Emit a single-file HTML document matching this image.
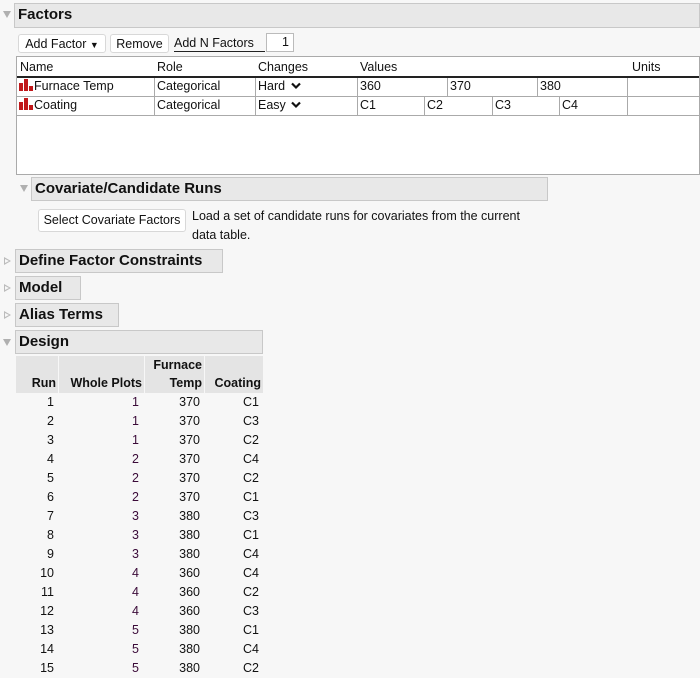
<!DOCTYPE html>
<html><head><meta charset="utf-8"><style>
body{margin:0;width:700px;height:678px;background:#f7f7f7;font-family:"Liberation Sans",sans-serif;font-size:12.5px;color:#111;position:relative;overflow:hidden}
.a{position:absolute;white-space:nowrap}
.hdr{position:absolute;background:#e8e8e8;border:1px solid #c8c8c8;font-weight:bold;font-size:15px;line-height:22px;padding-left:3px;box-sizing:border-box}
.tri{position:absolute;width:0;height:0}
.td{border-left:4px solid transparent;border-right:4px solid transparent;border-top:7px solid #b0b0b0}
.tr{border-top:4px solid transparent;border-bottom:4px solid transparent;border-left:7px solid #bbb}
.tr:after{content:"";position:absolute;left:-6px;top:-2px;border-top:2px solid transparent;border-bottom:2px solid transparent;border-left:4px solid #f7f7f7}
.btn{position:absolute;background:#fff;border:1px solid #d8d8d8;border-radius:3px;box-sizing:border-box;text-align:center;line-height:18px;font-size:12.5px}
.cell{position:absolute;border-left:1px solid #aaa;border-bottom:1px solid #aaa;box-sizing:border-box;padding-left:2px;line-height:17px;font-size:12.5px;white-space:nowrap}
.bars{display:inline-block;width:14px;height:12px;vertical-align:-1px;margin-right:1px;position:relative}
.bars i{position:absolute;bottom:0;background:#c0171a;width:4px}
.r{position:absolute;text-align:right;font-size:12.5px}
.h{position:absolute;background:#e4e4e4;font-weight:bold;font-size:12.5px;text-align:right;box-sizing:border-box;padding-right:2px;line-height:18px}
.chev{display:inline-block;vertical-align:0;margin-left:2px}
</style></head><body>
<div class="tri td" style="left:3px;top:11px"></div>
<div class="hdr" style="left:14px;top:3px;width:686px;height:25px">Factors</div>
<div class="btn" style="left:18px;top:34px;width:88px;height:19px">Add Factor <span style="font-size:9px">▼</span></div>
<div class="btn" style="left:110px;top:34px;width:59px;height:19px">Remove</div>
<div class="a" style="left:174px;top:35px;font-size:12.5px;border-bottom:1px solid #222;width:91px;line-height:16px">Add N Factors</div>
<div class="a" style="left:266px;top:33px;width:28px;height:19px;background:#fff;border:1px solid #bbb;box-sizing:border-box;text-align:right;padding-right:4px;line-height:17px">1</div>
<div class="a" style="left:16px;top:56px;width:684px;height:119px;background:#fff;border:1px solid #aaa;box-sizing:border-box"></div>
<div class="a" style="left:17px;top:76px;width:682px;height:2px;background:#222"></div>
<div class="a" style="left:20px;top:60px">Name</div>
<div class="a" style="left:157px;top:60px">Role</div>
<div class="a" style="left:258px;top:60px">Changes</div>
<div class="a" style="left:360px;top:60px">Values</div>
<div class="a" style="left:632px;top:60px">Units</div>
<div class="cell" style="left:17px;top:78px;width:137px;height:19px;border-left:0"><span class="bars"><i style="left:0;height:8px"></i><i style="left:5px;height:12px"></i><i style="left:10px;height:5px"></i></span>Furnace Temp</div>
<div class="cell" style="left:154px;top:78px;width:101px;height:19px">Categorical</div>
<div class="cell" style="left:255px;top:78px;width:102px;height:19px">Hard <svg class="chev" width="10" height="8"><path d="M1 1.5L5 5.5L9 1.5" stroke="#111" stroke-width="2.2" fill="none"/></svg></div>
<div class="cell" style="left:357px;top:78px;width:90px;height:19px">360</div>
<div class="cell" style="left:447px;top:78px;width:90px;height:19px">370</div>
<div class="cell" style="left:537px;top:78px;width:90px;height:19px">380</div>
<div class="cell" style="left:627px;top:78px;width:72px;height:19px"></div>
<div class="cell" style="left:17px;top:97px;width:137px;height:19px;border-left:0"><span class="bars"><i style="left:0;height:8px"></i><i style="left:5px;height:12px"></i><i style="left:10px;height:5px"></i></span>Coating</div>
<div class="cell" style="left:154px;top:97px;width:101px;height:19px">Categorical</div>
<div class="cell" style="left:255px;top:97px;width:102px;height:19px">Easy <svg class="chev" width="10" height="8"><path d="M1 1.5L5 5.5L9 1.5" stroke="#111" stroke-width="2.2" fill="none"/></svg></div>
<div class="cell" style="left:357px;top:97px;width:67px;height:19px">C1</div>
<div class="cell" style="left:424px;top:97px;width:68px;height:19px">C2</div>
<div class="cell" style="left:492px;top:97px;width:67px;height:19px">C3</div>
<div class="cell" style="left:559px;top:97px;width:68px;height:19px">C4</div>
<div class="cell" style="left:627px;top:97px;width:72px;height:19px"></div>

<div class="tri td" style="left:20px;top:185px"></div>
<div class="hdr" style="left:31px;top:177px;width:517px;height:24px">Covariate/Candidate Runs</div>
<div class="btn" style="left:38px;top:209px;width:148px;height:23px;line-height:21px">Select Covariate Factors</div>
<div class="a" style="left:192px;top:207px;font-size:12.5px;line-height:19px">Load a set of candidate runs for covariates from the current<br>data table.</div>

<div class="tri tr" style="left:4px;top:257px"></div>
<div class="hdr" style="left:15px;top:249px;width:208px;height:24px">Define Factor Constraints</div>
<div class="tri tr" style="left:4px;top:284px"></div>
<div class="hdr" style="left:15px;top:276px;width:66px;height:24px">Model</div>
<div class="tri tr" style="left:4px;top:311px"></div>
<div class="hdr" style="left:15px;top:303px;width:104px;height:24px">Alias Terms</div>
<div class="tri td" style="left:3px;top:339px"></div>
<div class="hdr" style="left:15px;top:330px;width:248px;height:24px">Design</div>

<div class="h" style="left:16px;top:356px;width:42px;height:37px;padding-top:18px">Run</div>
<div class="h" style="left:59px;top:356px;width:85px;height:37px;padding-top:18px">Whole Plots</div>
<div class="h" style="left:145px;top:356px;width:59px;height:37px">Furnace<br>Temp</div>
<div class="h" style="left:205px;top:356px;width:58px;height:37px;padding-top:18px">Coating</div>
<div id="rows"></div>
<script>
var d=[[1,1,370,'C1'],[2,1,370,'C3'],[3,1,370,'C2'],[4,2,370,'C4'],[5,2,370,'C2'],[6,2,370,'C1'],[7,3,380,'C3'],[8,3,380,'C1'],[9,3,380,'C4'],[10,4,360,'C4'],[11,4,360,'C2'],[12,4,360,'C3'],[13,5,380,'C1'],[14,5,380,'C4'],[15,5,380,'C2']];
var h='';d.forEach(function(r,i){var y=395+i*19;
h+='<div class="r" style="left:16px;width:38px;top:'+y+'px">'+r[0]+'</div>';
h+='<div class="r" style="left:59px;width:80px;top:'+y+'px;color:#3a0a38">'+r[1]+'</div>';
h+='<div class="r" style="left:145px;width:55px;top:'+y+'px">'+r[2]+'</div>';
h+='<div class="r" style="left:205px;width:54px;top:'+y+'px">'+r[3]+'</div>';});
document.getElementById('rows').innerHTML=h;
</script>
</body></html>
